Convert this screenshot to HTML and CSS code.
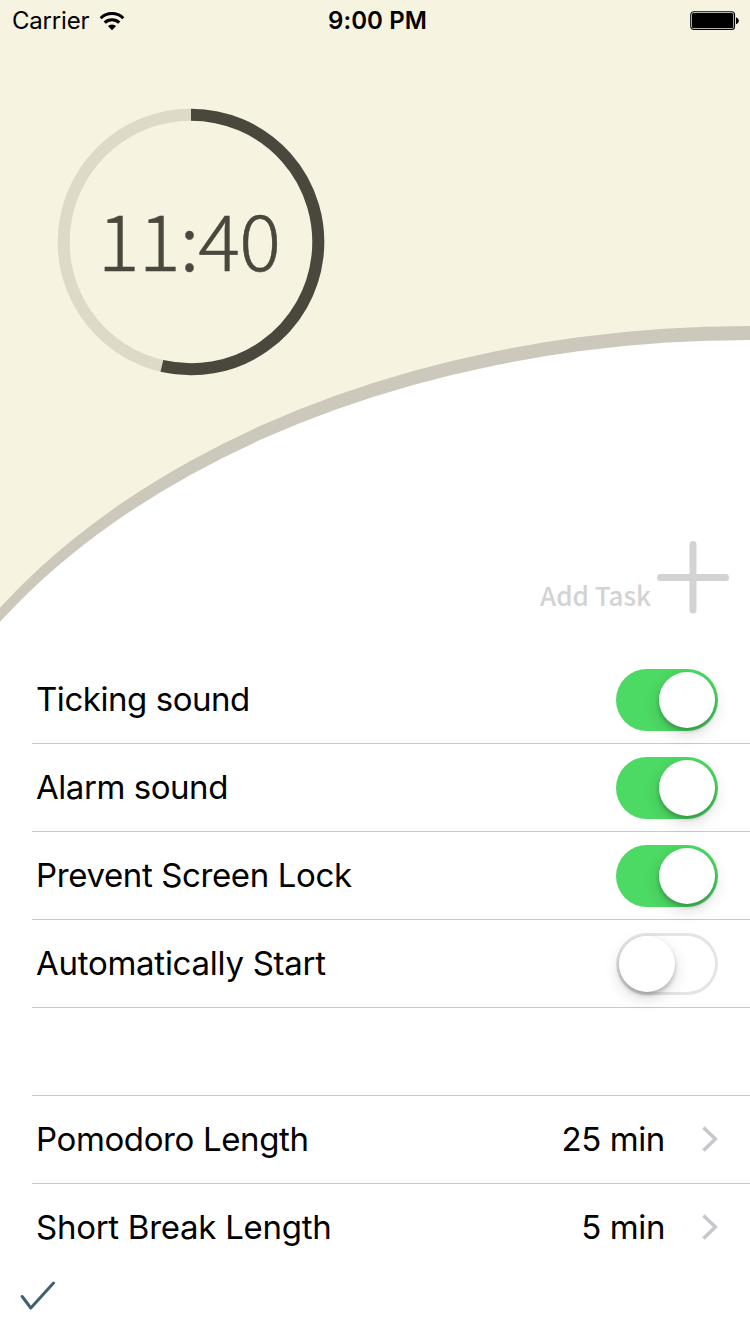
FILE: index.html
```html
<!DOCTYPE html>
<html lang="en">
<head>
<meta charset="utf-8">
<title>Pomodoro Settings</title>
<link rel="stylesheet" href="styles.css">
</head>
<body>
<main class="screen">
  <header class="hero">
    <svg class="hero-bg" viewBox="0 0 750 656" aria-hidden="true">
      <rect width="750" height="656" fill="#f6f3e0"/>
      <ellipse cx="750" cy="917" rx="880" ry="591" fill="#ccc8bb"/>
      <ellipse cx="750" cy="931" rx="880" ry="591" fill="#fff"/>
    </svg>
    <div class="status">
      <div class="status-left">
        <span class="carrier">Carrier</span>
        <svg class="wifi" viewBox="0 0 26 20">
          <g fill="none" stroke="#000" stroke-width="3">
            <path d="M1.7 7.2a16.2 16.2 0 0 1 22.6 0"/>
            <path d="M5.7 11.6a10.6 10.6 0 0 1 14.6 0"/>
          </g>
          <path d="M13 19.2 8.9 15a6 6 0 0 1 8.2 0z"/>
        </svg>
      </div>
      <span class="clock">9:00 PM</span>
      <svg class="battery" viewBox="0 0 50 20">
        <rect x=".75" y=".75" width="43.8" height="17.8" rx="3" fill="none" stroke="#000" stroke-width="1.1"/>
        <rect x="2" y="2" width="41.3" height="15.3" rx="1.5"/>
        <path d="M46 6.2q2.9 1 2.9 3.5t-2.9 3.500z"/>
      </svg>
    </div>
    <div class="timer">
      <svg class="ring" viewBox="0 0 268 268">
        <g fill="none" stroke-width="12">
          <circle cx="134" cy="134" r="127.300" stroke="#dddac7"/>
          <path d="M134 6.700A127.300 127.300 0 1 1 104.900 257.930" stroke="#4a473d"/>
        </g>
      </svg>
      <span class="time">11:40</span>
    </div>
    <div class="add-task">
      <span class="add-label">Add Task</span>
      <svg class="plus" viewBox="0 0 74 74"><path d="M37 4.500V70M4.500 37.500H69.500" stroke="#d3d3d3" stroke-width="7" stroke-linecap="round"/></svg>
    </div>
  </header>

  <section class="list">
    <div class="row"><span class="label tight">Ticking sound</span><span class="switch on"><i class="knob"></i></span></div>
    <div class="row"><span class="label tight">Alarm sound</span><span class="switch on"><i class="knob"></i></span></div>
    <div class="row"><span class="label">Prevent Screen Lock</span><span class="switch on"><i class="knob"></i></span></div>
    <div class="row"><span class="label loose">Automatically Start</span><span class="switch"><i class="knob"></i></span></div>
    <div class="row"></div>
    <div class="row"><span class="label">Pomodoro Length</span><span class="value">25 min</span><svg class="chevron" viewBox="0 0 16 26"><path d="M1.500 1.500 13.300 13 1.500 24.500"/></svg></div>
    <div class="row last"><span class="label loose">Short Break Length</span><span class="value">5 min</span><svg class="chevron" viewBox="0 0 16 26"><path d="M1.500 1.500 13.300 13 1.500 24.500"/></svg></div>
  </section>
  <footer class="footer">
    <svg class="check" viewBox="0 0 36 30"><path d="M2.200 15.500 10.800 27 33.500 2"/></svg>
  </footer>
</main>
</body>
</html>
```

FILE: styles.css
```css
* { box-sizing: border-box; }
body { margin: 0; background: #fff; color: #000; font-family: Inter, "Liberation Sans", sans-serif; }
.screen { width: 750px; height: 1334px; overflow: hidden; display: flex; flex-direction: column; }
.hero { position: relative; height: 656px; flex: none; display: flex; flex-direction: column; }
.hero-bg { position: absolute; left: 0; top: 0; width: 750px; height: 656px; z-index: -1; }

.status { display: grid; grid-template-columns: 1fr auto 1fr; align-items: center; height: 42px; padding: 0 10px 0 12px; }
.status-left { display: flex; align-items: center; gap: 10px; }
.carrier { font-size: 24px; line-height: 40px; letter-spacing: -0.2px; }
.wifi { width: 26px; height: 20px; margin-bottom: 1px; }
.clock { font-size: 24px; font-weight: 600; line-height: 40px; letter-spacing: 0.1px; padding-left: 3px; }
.battery { width: 50px; height: 20px; justify-self: end; }

.timer { width: 268px; height: 268px; margin: 66px 0 0 57px; display: grid; place-items: center; }
.ring, .time { grid-area: 1 / 1; }
.ring { width: 268px; height: 268px; }
.time { font-family: "Noto Sans CJK SC", sans-serif; font-weight: 300; font-size: 78px; line-height: 100px; letter-spacing: -0.8px; padding: 0 4px 11px 0; color: #4a473d; -webkit-text-stroke: 0.5px #4a473d; }

.add-task { display: flex; align-items: flex-start; justify-content: flex-end; margin-top: 164px; padding-right: 20px; gap: 5px; }
.add-label { font-family: "Noto Sans CJK SC", sans-serif; font-weight: 500; font-size: 26px; line-height: 40px; color: #d3d3d3; margin-top: 35px; }
.plus { width: 74px; height: 74px; }

.list { margin-left: 32px; flex: none; }
.row { height: 88px; display: flex; align-items: center; padding: 0 32px 0 4px; border-bottom: 1px solid #c8c7cc; }
.last { border-bottom-color: transparent; }
.label, .value { font-size: 33px; line-height: 40px; padding-bottom: 2px; letter-spacing: -0.38px; }
.label { flex: 1; }
.label.tight { letter-spacing: -0.45px; }
.label.loose { letter-spacing: -0.27px; }
.value { margin-right: 37px; }
.chevron { width: 16px; height: 26px; margin-bottom: 1px; fill: none; stroke: #c7c7cc; stroke-width: 3.6; }

.switch { width: 102px; height: 62px; border-radius: 31px; padding: 3px; display: flex; box-shadow: inset 0 0 0 3px #e5e5e5; }
.switch.on { background: #4cd964; box-shadow: none; justify-content: flex-end; }
.knob { width: 56px; height: 56px; border-radius: 50%; background: #fff; box-shadow: 0 6px 16px rgba(0,0,0,.15), 0 3px 4px rgba(0,0,0,.22); }

.footer { padding: 9px 0 0 20px; }
.check { display: block; width: 36px; height: 30px; fill: none; stroke: #406073; stroke-width: 3; stroke-linecap: round; stroke-linejoin: round; }
```
